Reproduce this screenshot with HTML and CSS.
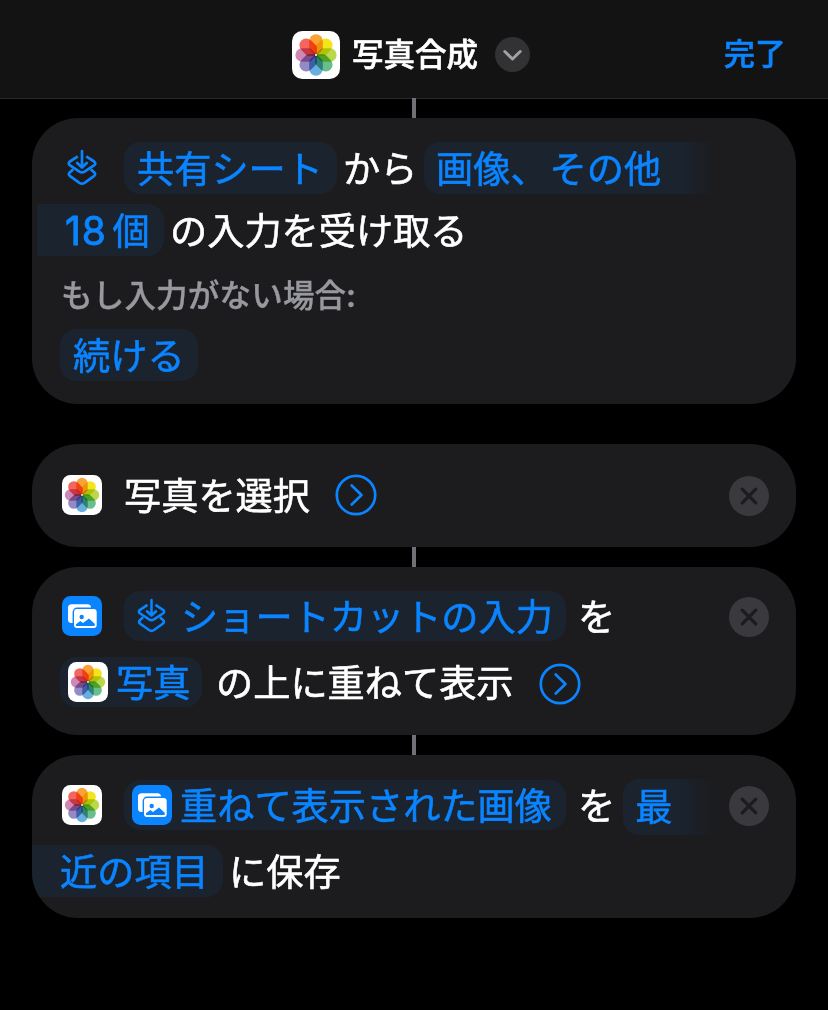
FILE: index.html
```
<!DOCTYPE html>
<html lang="ja">
<head>
<meta charset="utf-8">
<title>写真合成</title>
<link rel="stylesheet" href="styles.css">
</head>
<body>
<svg class="defs" aria-hidden="true">
  <defs>
    <path id="petal" d="M-5.700-11.500a5.700 5.700 0 0 1 11.400 0V-6.400C5.700-4.800 5.200-4.200 4-3L.8 0H-.8L-4-3C-5.200-4.200-5.700-4.800-5.700-6.400Z"/>
    <symbol id="photos" viewBox="0 0 40 40">
      <rect width="40" height="40" rx="8.500" fill="#fff"/>
      <g class="petals" transform="translate(20 20)">
        <use href="#petal" fill="#fba237"/>
        <use href="#petal" fill="#f4e41d" transform="rotate(45)"/>
        <use href="#petal" fill="#b9d84a" transform="rotate(90)"/>
        <use href="#petal" fill="#69be8b" transform="rotate(135)"/>
        <use href="#petal" fill="#68aede" transform="rotate(180)"/>
        <use href="#petal" fill="#958bc4" transform="rotate(225)"/>
        <use href="#petal" fill="#cf87b5" transform="rotate(270)"/>
        <use href="#petal" fill="#f4655e" transform="rotate(315)"/>
      </g>
      <circle cx="20" cy="20" r="0.900" fill="#fff"/>
    </symbol>
    <symbol id="input" viewBox="0 0 30 38">
      <g fill="none" stroke="#0a84ff" stroke-width="2.700" stroke-linecap="round" stroke-linejoin="round">
        <path d="M15 2.200V18.200M10.200 14l4.800 4.500L19.800 14"/>
        <path stroke-linecap="butt" d="M10.800 7.300 2.900 12.500q-2.500 1.900.1 3.900l9.400 6.200q2.600 1.600 5.200 0l9.400-6.200q2.600-2 .1-3.900L19.200 7.300"/>
        <path stroke-linecap="butt" d="M6.200 20.400 2.900 23.200q-2.200 2.100.2 3.900l9.300 6.700q2.600 1.700 5.200 0l9.300-6.700q2.400-1.800.2-3.900L23.800 20.400"/>
      </g>
    </symbol>
    <symbol id="images" viewBox="0 0 40 40">
      <rect class="tile" width="40" height="40" rx="8.500"/>
      <rect x="6" y="8.300" width="23" height="18.700" rx="3.500" fill="#fff"/>
      <rect class="tile" x="10.600" y="11.600" width="25.500" height="21.800" rx="4.400"/>
      <rect x="12" y="13" width="22.700" height="19" rx="3" fill="#fff"/>
      <circle class="tile" cx="19.700" cy="21" r="2.200"/>
      <path class="tile" d="M14 29.900v-1.600l4.300-3.300 2.700 1.900 6-4.400 5.700 5.200v2.200z"/>
    </symbol>
    <symbol id="expand" viewBox="0 0 42 42">
      <g fill="none" stroke="#0a84ff" stroke-width="2.700" stroke-linecap="round" stroke-linejoin="round">
        <circle cx="21" cy="21" r="19.200"/>
        <path d="M16.700 11.500 26.500 21l-9.800 9.500"/>
      </g>
    </symbol>
    <symbol id="close" viewBox="0 0 40 40">
      <circle cx="20" cy="20" r="20" fill="#3a3a3e"/>
      <path d="M13.200 13.200 26.800 26.800M26.800 13.200 13.200 26.800" stroke="#1c1c1e" stroke-width="3.300" stroke-linecap="round"/>
    </symbol>
  </defs>
</svg>

<header class="header">
  <div class="title">
    <svg class="title-icon"><use href="#photos"/></svg>
    <h1 class="title-text">写真合成</h1>
    <svg class="title-menu" viewBox="0 0 35 35"><circle cx="17.500" cy="17.500" r="17.500" fill="#323234"/><path d="M9.800 14.500 17.500 22l7.700-7.500" fill="none" stroke="#a0a0a6" stroke-width="3" stroke-linecap="round" stroke-linejoin="round"/></svg>
  </div>
  <a class="done">完了</a>
</header>

<main class="actions">
  <div class="link"></div>
  <section class="card card-input">
    <div class="row row-first">
      <svg class="lead-input"><use href="#input"/></svg>
      <span class="pill pill-share">共有シート</span>
      <span class="text text-from">から</span>
      <span class="pill pill-open pill-types">画像、<span class="others">その他</span></span>
    </div>
    <div class="row row-count">
      <span class="pill pill-rest pill-count"><span class="number">18</span>個</span>
      <span class="text">の入力を受け取る</span>
    </div>
    <p class="hint">もし入力がない場合:</p>
    <div class="row row-continue"><span class="pill">続ける</span></div>
  </section>

  <section class="card card-select">
    <div class="row">
      <svg class="icon"><use href="#photos"/></svg>
      <span class="text text-lead">写真を選択</span>
      <svg class="expand"><use href="#expand"/></svg>
      <svg class="close"><use href="#close"/></svg>
    </div>
  </section>
  <div class="link"></div>

  <section class="card card-overlay">
    <div class="row">
      <svg class="icon"><use href="#images"/></svg>
      <span class="pill pill-token pill-variable"><svg class="token-input"><use href="#input"/></svg>ショートカットの入力</span>
      <span class="text text-wo">を</span>
      <svg class="close"><use href="#close"/></svg>
    </div>
    <div class="row row-photo">
      <span class="pill pill-token pill-photo"><svg class="icon"><use href="#photos"/></svg>写真</span>
      <span class="text text-over">の上に重ねて表示</span>
      <svg class="expand"><use href="#expand"/></svg>
    </div>
  </section>
  <div class="link"></div>

  <section class="card card-save">
    <div class="row row-save">
      <svg class="icon"><use href="#photos"/></svg>
      <span class="pill pill-token pill-result"><svg class="icon"><use href="#images"/></svg>重ねて表示された画像</span>
      <span class="text text-wo">を</span>
      <span class="pill pill-open pill-album">最</span>
      <svg class="close"><use href="#close"/></svg>
    </div>
    <div class="row row-album">
      <span class="pill pill-rest pill-recent">近の項目</span>
      <span class="text">に保存</span>
    </div>
  </section>
</main>
</body>
</html>
```

FILE: styles.css
```
* {
  box-sizing: border-box;
}

body {
  margin: 0;
  min-height: 1010px;
  background: #000;
  color: #fff;
  font-family: "Noto Sans CJK JP", sans-serif;
  font-size: 37.2px;
  font-weight: 400;
}

svg {
  display: block;
  flex: none;
}

.defs {
  position: absolute;
  width: 0;
  height: 0;
}

.petals {
  isolation: isolate;
}

.petals use {
  mix-blend-mode: multiply;
}

.tile {
  fill: #0a84ff;
}

.header {
  display: flex;
  justify-content: space-between;
  height: 99px;
  padding: 30px 42px 0 292px;
  background: #131313;
  border-bottom: 1px solid #29292b;
}

.title {
  display: flex;
  align-items: center;
  height: 50px;
}

.title-icon {
  width: 48px;
  height: 48px;
}

.title-text {
  margin: 0 0 0 12px;
  padding-bottom: 5px;
  font-size: 31.500px;
  font-weight: 500;
  line-height: 45px;
  -webkit-text-stroke: 0.6px;
}

.title-menu {
  width: 35px;
  height: 35px;
  margin: -1px 0 0 17px;
}

.done {
  color: #0a84ff;
  font-size: 31px;
  font-weight: 500;
  line-height: 44px;
  -webkit-text-stroke: 0.6px;
}

.actions {
  display: flex;
  flex-direction: column;
  padding: 0 32px;
  margin-top: -1px;
}

.link {
  width: 4px;
  height: 20px;
  margin-left: 380px;
  background: #707077;
}

.card {
  overflow: hidden;
  padding: 0 27px 0 28px;
  border-radius: 46px;
  background: #1c1c1e;
}

.card-input {
  height: 286px;
  padding-top: 24px;
  margin-bottom: 40px;
}

.card-select {
  height: 103px;
  padding-top: 26px;
}

.card-overlay {
  height: 168px;
  padding-top: 24px;
}

.card-save {
  height: 163px;
  padding-top: 24px;
}

.row {
  display: flex;
  align-items: center;
  height: 50px;
  white-space: nowrap;
}

.row-first,
.row-count,
.row-continue {
  height: 52px;
}

.row-count {
  margin-top: 10px;
}

.row-photo {
  margin-top: 16px;
}

.row-save {
  align-items: flex-start;
  height: 56px;
}

.row-album {
  height: 52px;
  margin-top: 10px;
}

.text {
  padding-bottom: 2px;
  line-height: 50px;
}

.text,
.pill {
  -webkit-text-stroke: 0.6px;
}

.pill {
  display: flex;
  align-items: center;
  height: 52px;
  padding: 0 13px 2px;
  border-radius: 16px;
  background: #1a232e;
  color: #0a84ff;
  line-height: 50px;
}

.pill-token {
  height: 50px;
}

.pill-token svg {
  margin-top: 2px;
}

.pill-open {
  border-radius: 16px 0 0 16px;
  background: linear-gradient(to right, #1a232e calc(100% - 34px), #1c1c1e);
}

.pill-rest {
  border-radius: 0 16px 16px 0;
}

.lead-input {
  width: 30px;
  height: 38px;
  margin-left: 7px;
}

.pill-share {
  width: 213px;
  margin-left: 27px;
}

.text-from {
  width: 81px;
  margin-left: 6px;
}

.pill-types {
  width: 290px;
  padding-left: 12px;
}

.others {
  margin-left: 2px;
}

.pill-count {
  width: 127px;
  margin: 0 6px 0 -23px;
  padding-left: 28px;
}

.number {
  padding-top: 3px;
  margin-right: 6px;
  font-family: Inter, sans-serif;
  font-size: 39px;
  letter-spacing: 0.8px;
  -webkit-text-stroke: 0.9px;
}

.hint {
  height: 73px;
  margin: 0;
  padding-left: 1px;
  color: #98989f;
  font-size: 31.500px;
  font-weight: 500;
  line-height: 74px;
  letter-spacing: 0.2px;
  -webkit-text-stroke: 0.35px;
}

.icon {
  width: 40px;
  height: 40px;
  margin-left: 2px;
}

.text-lead {
  margin-left: 22px;
}

.expand {
  width: 42px;
  height: 42px;
  margin-left: 25px;
}

.row-photo .expand {
  margin-top: 4px;
}

.close {
  width: 40px;
  height: 40px;
  margin: 2px 0 0 auto;
}

.pill-variable {
  width: 442px;
  margin-left: 22px;
}

.token-input {
  width: 29px;
  height: 36px;
  margin-right: 15px;
}

.pill-photo {
  width: 142px;
  padding-left: 6px;
}

.pill-token .icon {
  margin-right: 8px;
}

.text-over {
  margin-left: 14px;
}

.text-wo {
  margin-left: 12px;
}

.row-save > .icon {
  margin-top: 6px;
}

.row-save .close {
  margin-top: 7px;
}

.pill-result {
  width: 442px;
  margin: 1px 0 0 22px;
  padding-left: 6px;
}

.pill-album {
  width: 90px;
  height: 56px;
  margin-left: 8px;
  padding-left: 12px;
  padding-bottom: 4px;
}

.pill-recent {
  width: 191px;
  margin: 0 6px 0 -28px;
  padding-left: 28px;
}
```
